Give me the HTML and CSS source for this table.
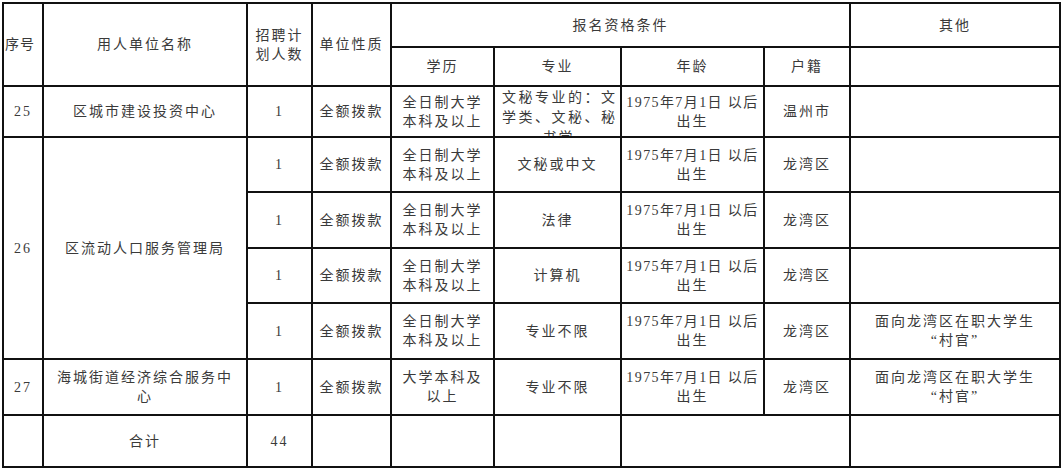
FILE: index.html
```html
<!DOCTYPE html>
<html lang="zh-CN">
<head>
<meta charset="utf-8">
<title>招聘计划表</title>
<link rel="stylesheet" href="styles.css">
</head>
<body>
<div class="sheet">
  <div class="cell r2 left">序号</div>
  <div class="cell r2">用人单位名称</div>
  <div class="cell r2">招聘计<br>划人数</div>
  <div class="cell r2">单位性质</div>
  <div class="cell c4">报名资格条件</div>
  <div class="cell">其他</div>

  <div class="cell">学历</div>
  <div class="cell">专业</div>
  <div class="cell">年龄</div>
  <div class="cell">户籍</div>
  <div class="cell"></div>

  <div class="cell">25</div>
  <div class="cell">区城市建设投资中心</div>
  <div class="cell">1</div>
  <div class="cell">全额拨款</div>
  <div class="cell">全日制大学<br>本科及以上</div>
  <div class="cell top"><div class="wrapjust"><span class="jl">文秘专业的：文</span><span class="jl">学类、文秘、秘</span><span class="cl">书学</span></div></div>
  <div class="cell"><div class="age"><span class="nw">1975年7月1日 以后</span><br>出生</div></div>
  <div class="cell">温州市</div>
  <div class="cell"></div>

  <div class="cell r4">26</div>
  <div class="cell r4">区流动人口服务管理局</div>
  <div class="cell">1</div>
  <div class="cell">全额拨款</div>
  <div class="cell">全日制大学<br>本科及以上</div>
  <div class="cell">文秘或中文</div>
  <div class="cell"><div class="age"><span class="nw">1975年7月1日 以后</span><br>出生</div></div>
  <div class="cell">龙湾区</div>
  <div class="cell"></div>

  <div class="cell">1</div>
  <div class="cell">全额拨款</div>
  <div class="cell">全日制大学<br>本科及以上</div>
  <div class="cell">法律</div>
  <div class="cell"><div class="age"><span class="nw">1975年7月1日 以后</span><br>出生</div></div>
  <div class="cell">龙湾区</div>
  <div class="cell"></div>

  <div class="cell">1</div>
  <div class="cell">全额拨款</div>
  <div class="cell">全日制大学<br>本科及以上</div>
  <div class="cell">计算机</div>
  <div class="cell"><div class="age"><span class="nw">1975年7月1日 以后</span><br>出生</div></div>
  <div class="cell">龙湾区</div>
  <div class="cell"></div>

  <div class="cell">1</div>
  <div class="cell">全额拨款</div>
  <div class="cell">全日制大学<br>本科及以上</div>
  <div class="cell">专业不限</div>
  <div class="cell"><div class="age"><span class="nw">1975年7月1日 以后</span><br>出生</div></div>
  <div class="cell">龙湾区</div>
  <div class="cell">面向龙湾区在职大学生<br>“村官”</div>

  <div class="cell">27</div>
  <div class="cell">海城街道经济综合服务中<br>心</div>
  <div class="cell">1</div>
  <div class="cell">全额拨款</div>
  <div class="cell">大学本科及<br>以上</div>
  <div class="cell">专业不限</div>
  <div class="cell"><div class="age"><span class="nw">1975年7月1日 以后</span><br>出生</div></div>
  <div class="cell">龙湾区</div>
  <div class="cell">面向龙湾区在职大学生<br>“村官”</div>

  <div class="cell"></div>
  <div class="cell">合计</div>
  <div class="cell">44</div>
  <div class="cell"></div>
  <div class="cell"></div>
  <div class="cell"></div>
  <div class="cell c2"></div>
  <div class="cell"></div>
</div>
</body>
</html>
```

FILE: styles.css
```css
html, body {
  margin: 0;
  padding: 0;
  background: #ffffff;
}

.sheet {
  margin: 2px 0 0 2px;
  width: 1055px;
  display: grid;
  grid-template-columns: 38px 202px 63px 77px 101px 125px 141px 84px 208px;
  grid-template-rows: 42px 37px 49px 53px 54px 53px 54px 54px 50px;
  gap: 2px;
  padding: 2px;
  background: #111111;
  font-family: "Liberation Serif", "Noto Sans CJK SC", serif;
  font-size: 14px;
  line-height: 19px;
  letter-spacing: 2px;
  color: #3a3a3a;
}

.cell {
  background: #ffffff;
  display: flex;
  flex-direction: column;
  justify-content: center;
  align-items: center;
  text-align: center;
  overflow: hidden;
}

.cell.left {
  align-items: flex-start;
  padding-left: 1px;
  letter-spacing: 1px;
}

.cell.top {
  justify-content: flex-start;
  align-items: stretch;
}

.r2 { grid-row: span 2; }
.r4 { grid-row: span 4; }
.c4 { grid-column: span 4; }
.c2 { grid-column: span 2; }

.age {
  text-align: center;
}

.nw { white-space: nowrap; letter-spacing: 1.4px; }

.wrapjust {
  padding: 1px 5px 0 7px;
  line-height: 20px;
}

.jl {
  display: block;
  text-align: justify;
  text-align-last: justify;
  letter-spacing: 0;
}

.cl {
  display: block;
  text-align: center;
}
```
